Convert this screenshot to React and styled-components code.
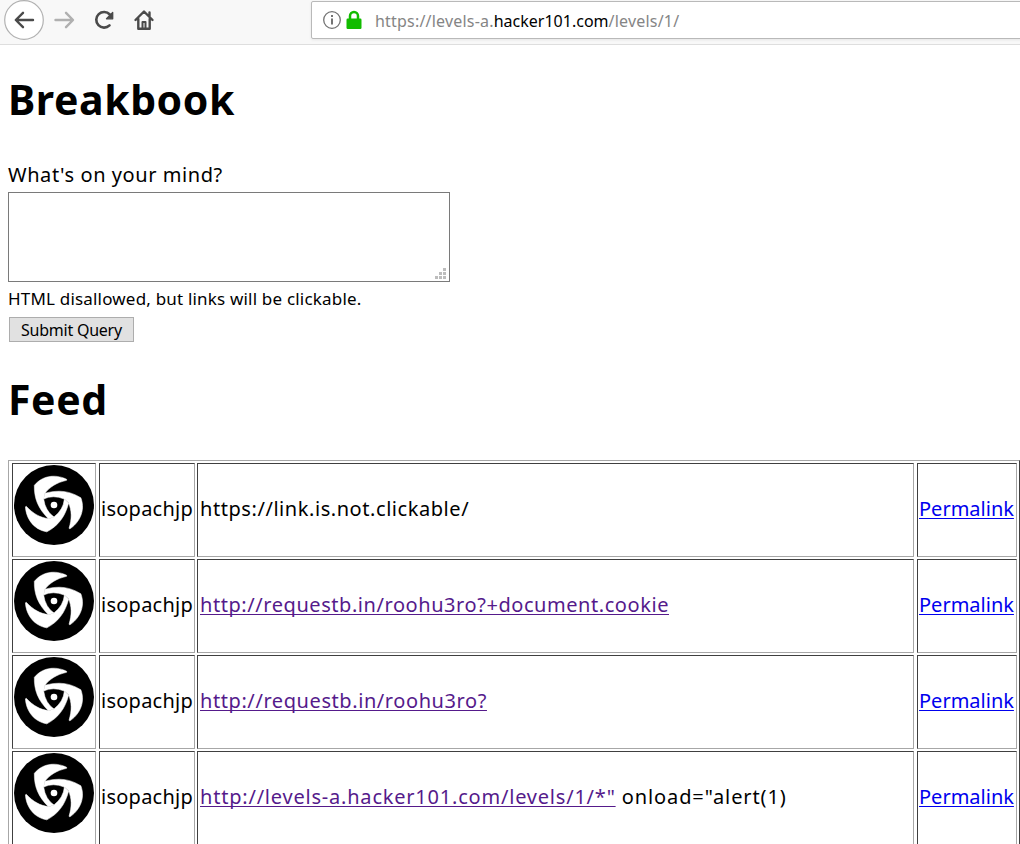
import React from 'react';
import styled, { createGlobalStyle } from 'styled-components';

const Global = createGlobalStyle`
  * { box-sizing: border-box; }
  html, body { margin: 0; background: #fff; overflow: hidden; }
  body { font-family: "Noto Sans", sans-serif; font-size: 20px; color: #000; }
`;
const Page = styled.div`width: 1020px; height: 844px; overflow: hidden;`;
const Toolbar = styled.header`
  display: flex; height: 45px; background: #f8f8f8; border-bottom: 1px solid #dedede;
`;
const Nav = styled.nav`width: 311px; flex: none; display: block; height: 44px;`;
const AddressBar = styled.div`
  flex: none; width: 720px; height: 38px; margin-top: 1px; display: flex; align-items: center;
  background: #fff; border: 1px solid #b9b9b9; border-radius: 2px; box-shadow: 0 1px 3px rgba(0,0,0,.08);
`;
const AddressIcons = styled.svg`flex: none; margin-left: 11px;`;
const Url = styled.div`
  font-family: "Noto Sans", sans-serif; font-size: 16px; line-height: 36px; color: #858585;
  margin-left: 12px; padding-top: 2px; letter-spacing: ${p => p.$spacing}px; white-space: nowrap;
  b { font-weight: 400; color: #000; letter-spacing: 0; }
`;
const Content = styled.main`padding: 0 0 0 8px;`;
const Heading = styled.h1`
  margin: ${p => p.$top}px 0 0; height: 60px; font-size: 41px; line-height: 60px; font-weight: 700;
  letter-spacing: ${p => p.$spacing}px;
`;
const Form = styled.form`display: flex; flex-direction: column; align-items: flex-start;`;
const Label = styled.label`
  margin-top: 30px; height: 32px; line-height: 32px; letter-spacing: ${p => p.$spacing}px; white-space: nowrap;
`;
const MessageBox = styled.div`
  width: 442px; height: 90px; border: 1px solid #7a7a7a; margin-top: 1px;
  display: flex; align-items: flex-end; justify-content: flex-end; padding: 0 3px 2px 0;
`;
const Hint = styled.small`
  height: 30px; line-height: 30px; margin-top: 2px; font-size: 17px; letter-spacing: ${p => p.$spacing}px; white-space: nowrap;
`;
const Submit = styled.button`
  width: 125px; height: 25px; margin: 3px 0 0 1px; padding: 0; border: 1px solid #adadad; border-radius: 0;
  background: #e1e1e1; font: 16px/22px "Noto Sans", sans-serif; color: #000; letter-spacing: ${p => p.$spacing}px;
`;
const Feed = styled.div`
  width: 1012px; height: 480px; margin-top: 31px; padding: 2px 0 0 3px;
  display: flex; flex-direction: column; gap: 2px;
  border: 1px solid #a7a7a7; border-right-color: #404040;
`;
const Row = styled.div`display: flex; flex: none; height: 94px;`;
const Cell = styled.div`
  flex: none; width: ${p => p.$width}px; margin-right: ${p => p.$gap || 0}px; padding: ${p => p.$pad || '0 1px'};
  border: 1px solid; border-color: #404040 #a7a7a7 #a7a7a7 #404040;
  line-height: 90px; letter-spacing: ${p => p.$spacing || 0}px; white-space: pre;
`;
const Avatar = styled.svg`display: block;`;
const Link = styled.a`
  color: ${p => (p.$visited ? '#551a8b' : '#0000ee')}; text-decoration: underline;
  letter-spacing: ${p => (p.$spacing === undefined ? 'inherit' : `${p.$spacing}px`)};
  text-decoration-thickness: 1px; text-underline-offset: 2px; text-decoration-skip-ink: none;
`;

const BLADE = 'M200 73C175 60 132 56 103 91C102 130 114 160 145 191L162 186Q136 168 131 132L134 116C150 95 170 83 200 76Z';

function Logo() {
  return (
    <Avatar width="80" height="80" viewBox="42 30 240 240">
      <circle cx="162" cy="150" r="120" />
      {[0, 120, 240].map(a => (
        <path key={a} d={BLADE} fill="#fff" stroke="#fff" strokeWidth="1.5" transform={`rotate(${a} 162 150)`} />
      ))}
      <circle cx="162" cy="150" r="10" fill="#fff" />
    </Avatar>
  );
}

const posts = [
  { text: 'https://link.is.not.clickable/', spacing: 0.56 },
  { link: 'http://requestb.in/roohu3ro?+document.cookie', linkSpacing: 0.56 },
  { link: 'http://requestb.in/roohu3ro?', linkSpacing: 0.58 },
  { link: 'http://levels-a.hacker101.com/levels/1/*"', linkSpacing: 0.79, text: ' onload="alert(1)', spacing: 0.9 },
];

export default function App() {
  return (
    <Page>
      <Global />
      <Toolbar>
        <Nav>
          <svg width="170" height="44" fill="none" stroke="#4a4a4a" strokeWidth="2.4" strokeLinecap="round" strokeLinejoin="round">
            <circle cx="24" cy="20" r="19.3" fill="#fff" stroke="#b1b1b1" strokeWidth="1.2" />
            <path d="M33 20H16M23 12.8L15.8 20L23 27.2" />
            <path d="M55.5 20H72.5M66 12.8L73 20L66 27.2" stroke="#b0b0b0" />
            <path d="M109.500 25.400A7.800 7.800 0 1 1 109.800 14.500" strokeWidth="2.600" />
            <path d="M112.700 12.500V18.800H106.500Z" fill="#4a4a4a" strokeWidth="1.300" />
            <path d="M135.500 20L144 11.500L152.500 20M138.300 19V28.800H149.700V19M149.500 12.500V16" />
            <path d="M142.500 28V22H145.500V28" strokeWidth="2" />
          </svg>
        </Nav>
        <AddressBar>
          <AddressIcons width="40" height="36">
            <circle cx="9" cy="18" r="8.3" fill="none" stroke="#737373" strokeWidth="1.3" />
            <path d="M8 16.5h2v6h-2zM8 13h2v2h-2z" fill="#737373" />
            <path d="M27 17V14a4 4 0 0 1 8 0V17" fill="none" stroke="#12bc00" strokeWidth="2.5" />
            <rect x="23.5" y="16.500" width="15" height="10.500" rx="1.200" fill="#12bc00" />
          </AddressIcons>
          <Url $spacing={0.2}>https://levels-a.<b>hacker101.com</b>/levels/1/</Url>
        </AddressBar>
      </Toolbar>
      <Content>
        <Heading $top={24} $spacing={0.58}>Breakbook</Heading>
        <Form>
          <Label $spacing={0.57}>What's on your mind?</Label>
          <MessageBox>
            <svg width="11" height="11" fill="#bdbdbd">
              <path d="M8 0h3v3h-3zM4 4h3v3h-3zM8 4h3v3h-3zM0 8h3v3h-3zM4 8h3v3h-3zM8 8h3v3h-3z" />
            </svg>
          </MessageBox>
          <Hint $spacing={0.19}>HTML disallowed, but links will be clickable.</Hint>
          <Submit type="button" $spacing={-0.24}>Submit Query</Submit>
        </Form>
        <Heading $top={27} $spacing={0.6}>Feed</Heading>
        <Feed>
          {posts.map((p, i) => (
            <Row key={i}>
              <Cell $width={84} $gap={3} $pad="1px"><Logo /></Cell>
              <Cell $width={96} $gap={2} $spacing={0.25}>isopachjp</Cell>
              <Cell $width={717} $gap={3} $spacing={p.spacing} $pad="0 2px">
                {p.link && <Link $visited $spacing={p.linkSpacing}>{p.link}</Link>}{p.text}
              </Cell>
              <Cell $width={100}><Link>Permalink</Link></Cell>
            </Row>
          ))}
        </Feed>
      </Content>
    </Page>
  );
}
